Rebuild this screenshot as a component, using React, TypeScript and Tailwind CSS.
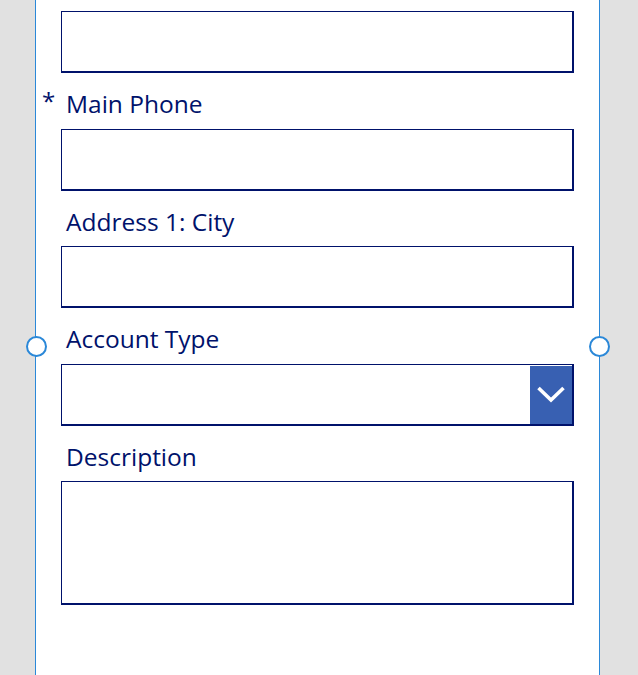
import React from "react";

const navy = "text-[#00126b]";

const Label = ({ text, required }: { text: string; required?: boolean }) => (
  <div className={`relative h-[55.5px] pl-[5px] pt-[16px] text-[24.5px] leading-[30px] ${navy}`}>
    {required && (
      <span className="absolute left-[-19px] top-[13px] text-[24px] leading-[30px]">*</span>
    )}
    {text}
  </div>
);

const Box = ({ h = "h-[62px]", children }: { h?: string; children?: React.ReactNode }) => (
  <div
    className={`relative w-[513px] ${h} border-l border-t border-r-2 border-b-2 border-[#00126b] bg-white`}
  >
    {children}
  </div>
);

const Handle = ({ side }: { side: "left" | "right" }) => (
  <div
    className={`absolute top-[336px] h-[21px] w-[21px] rounded-full border-2 border-[#2b88d8] bg-white ${
      side === "left" ? "left-[-10.5px]" : "right-[-10.5px]"
    }`}
  />
);

export default function App() {
  return (
    <div
      className="h-[675px] w-[638px] overflow-hidden bg-[#e1e1e1]"
      style={{ fontFamily: '"Open Sans", "Noto Sans", sans-serif' }}
    >
      <div className="relative ml-[35px] h-full w-[565px] border-x border-[#2b88d8] bg-white pl-[25px] pt-[11px]">
        <Box />
        <Label text="Main Phone" required />
        <Box />
        <Label text="Address 1: City" />
        <Box />
        <Label text="Account Type" />
        <Box>
          <div className="absolute bottom-0 right-0 top-px flex w-[42px] items-center justify-center bg-[#3860b2]">
            <svg width="28" height="17" viewBox="0 0 28 17" fill="none">
              <path d="M1.5 2 L14 14 L26.5 2" stroke="white" strokeWidth="3.6" />
            </svg>
          </div>
        </Box>
        <Label text="Description" />
        <Box h="h-[124px]" />
        <Handle side="left" />
        <Handle side="right" />
      </div>
    </div>
  );
}
